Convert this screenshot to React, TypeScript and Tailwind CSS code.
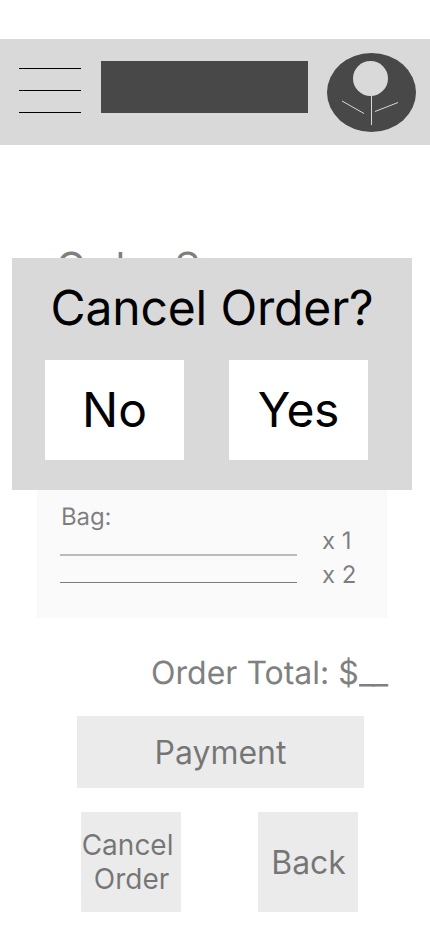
import React from "react";

function Logo() {
  return (
    <svg width="89" height="79" viewBox="327 53 89 79" className="block shrink-0">
      <ellipse cx="371.5" cy="92.5" rx="44.5" ry="39.5" fill="#484848" />
      <circle cx="370.5" cy="78.5" r="17.5" fill="#d9d9d9" />
      <path d="M371.5 96V125M342 101L364 113.500M375 111.500L398 102.500" stroke="#d9d9d9" strokeWidth="1" fill="none" />
    </svg>
  );
}

export default function App() {
  return (
    <main className="relative h-[932px] w-[430px] overflow-hidden bg-white pt-[39px] font-['Inter',sans-serif] text-black/50 [text-rendering:geometricPrecision]">
      <header className="flex h-[106px] items-start bg-[#d9d9d9] pl-[19px]">
        <div className="mt-[29px] flex w-[62px] flex-col gap-[21px]">
          <div className="h-px bg-black" />
          <div className="h-px bg-black" />
          <div className="h-px bg-black" />
        </div>
        <div className="mt-[22px] ml-5 h-[52px] w-[207px] bg-[#484848]" />
        <div className="mt-[14px] ml-[19px]"><Logo /></div>
      </header>
      <h1 className="mt-[98px] ml-[56px] h-[58px] text-[40px] leading-[48px] tracking-[-0.1px]">Order Summary</h1>
      <section className="mt-[189px] ml-[37px] flex h-[128px] w-[350px] bg-[#fafafa]">
        <div className="ml-[23px] w-[237px]">
          <p className="mt-[12px] h-[29px] pl-px text-[24px] leading-[29px] tracking-[-0.1px]">Bag:</p>
          <div className="mt-[23px] h-[2px] bg-[#bbbbbb]" />
          <div className="mt-[26px] h-px bg-[#7d7d7d]" />
        </div>
        <div className="mt-[34px] ml-[25px] text-[24px] leading-[34px]">
          <p>x 1</p><p>x 2</p>
        </div>
      </section>
      <p className="mt-[35px] mr-[46px] h-[39px] text-right text-[32px] leading-[39px] text-[#808080]">Order Total: $<span className="inline-block origin-left scale-x-[1.07] tracking-[-2px]">__</span></p>
      <button className="mt-[24px] ml-[77px] flex h-[72px] w-[287px] items-center justify-center bg-[#ebebeb] pt-[2px] text-[32px]">Payment</button>
      <div className="mt-6 ml-[81px] flex gap-[77px]">
        <button className="flex h-[100px] w-[100px] flex-col items-center justify-center bg-[#ebebeb] pl-px text-[28px] leading-[34px]">
          <span className="whitespace-pre">{"Cancel "}</span>
          <span>Order</span>
        </button>
        <button className="h-[100px] w-[100px] bg-[#ebebeb] pt-[2px] pl-px text-[32px] tracking-[-0.1px]">Back</button>
      </div>
      <div role="dialog" className="absolute top-[258px] left-[12px] h-[232px] w-[400px] bg-[#d9d9d9] text-[48px] leading-[58px] text-black">
        <h2 className="mt-[21px] text-center tracking-[-0.15px]">Cancel Order?</h2>
        <div className="mt-[23px] ml-[33px] flex gap-[45px]">
          <button className="h-[100px] w-[139px] bg-white">No</button>
          <button className="h-[100px] w-[139px] bg-white tracking-[-0.3px]">Yes</button>
        </div>
      </div>
    </main>
  );
}
